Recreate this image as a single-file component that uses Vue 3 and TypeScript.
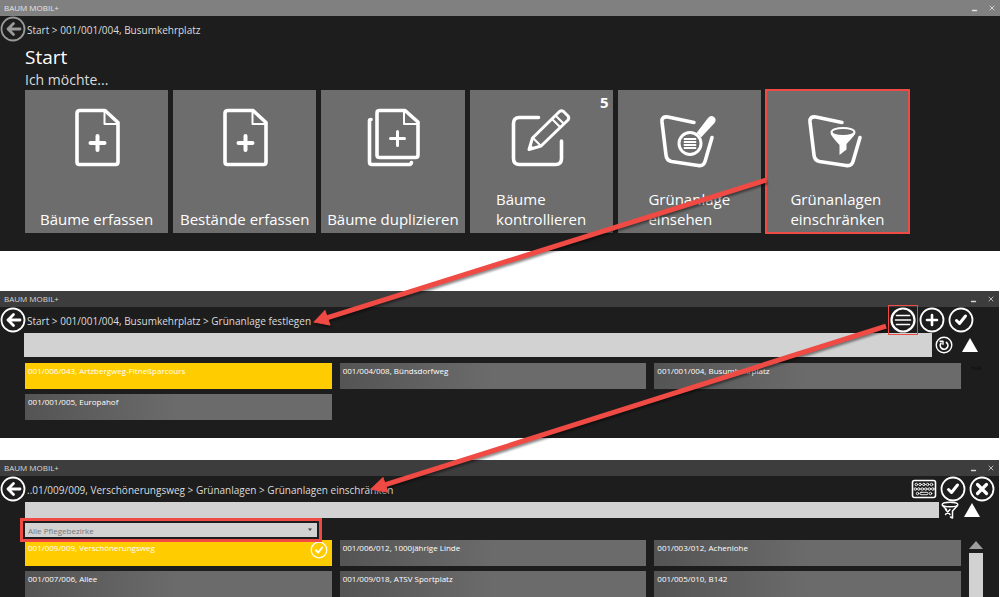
<script setup lang="ts">
import { ref } from 'vue'

type TileIcon = 'file' | 'copy' | 'edit' | 'search' | 'funnel'

interface Tile {
  icon: TileIcon
  lines: string[]
  count?: number
  marked?: boolean
}

const appName = 'BAUM MOBIL+'

const tiles: Tile[] = [
  { icon: 'file', lines: ['Bäume erfassen'] },
  { icon: 'file', lines: ['Bestände erfassen'] },
  { icon: 'copy', lines: ['Bäume duplizieren'] },
  { icon: 'edit', lines: ['Bäume', 'kontrollieren'], count: 5 },
  { icon: 'search', lines: ['Grünanlage', 'einsehen'] },
  { icon: 'funnel', lines: ['Grünanlagen', 'einschränken'], marked: true },
]

const pickList = [
  '001/006/043, Artzbergweg-Fitneßparcours',
  '001/004/008, Bündsdorfweg',
  '001/001/004, Busumkehrplatz',
  '001/001/005, Europahof',
]

const filterList = [
  '001/009/009, Verschönerungsweg',
  '001/006/012, 1000jährige Linde',
  '001/003/012, Achenlohe',
  '001/007/006, Allee',
  '001/009/018, ATSV Sportplatz',
  '001/005/010, B142',
]

const pickQuery = ref('')
const filterQuery = ref('')
const district = ref('all')
const picked = ref(0)
const filtered = ref(0)
</script>

<template>
  <div class="page">
    <section class="window start">
      <div class="titlebar">
        <span>{{ appName }}</span>
        <div class="controls">
          <button type="button" aria-label="Minimieren"><svg viewBox="0 0 8 8"><path d="M1.5 6.5h4" stroke-width="1.4" /></svg></button>
          <button type="button" aria-label="Schließen"><svg viewBox="0 0 8 8"><path d="M2 2l4 4M6 2l-4 4" /></svg></button>
        </div>
      </div>
      <header class="head">
        <button type="button" class="round dim" aria-label="Zurück">
          <svg viewBox="0 0 26 26"><circle cx="13" cy="13" r="11.500" /><path d="M20 13H8M13.500 7.500L8 13l5.500 5.500" stroke-width="2.800" /></svg>
        </button>
        <span class="crumbs">Start &gt; 001/001/004, Busumkehrplatz</span>
      </header>
      <h1>Start</h1>
      <p class="lead">Ich möchte...</p>
      <div class="tiles">
        <button v-for="tile in tiles" :key="tile.lines.join(' ')" type="button" class="tile" :class="{ marked: tile.marked }">
          <span v-if="tile.count" class="count">{{ tile.count }}</span>
          <svg class="glyph" viewBox="0 0 64 64" aria-hidden="true">
            <g v-if="tile.icon === 'file'">
              <path d="M15 4.500H40L53 16.500V56q0 2.500-2.500 2.500H14.500Q12 58.500 12 56V7Q12 4.500 15 4.500Z" />
              <path d="M39.500 5V18H53" stroke-width="2" />
              <path d="M32.500 30V44M25.500 37H39.500" stroke-width="4" />
            </g>
            <g v-else-if="tile.icon === 'copy'">
              <path d="M18.500 4.500H44L57 16V49q0 2.500-2.500 2.500H18.500Q16 51.500 16 49V7Q16 4.500 18.500 4.500Z" />
              <path d="M43 5V18H57" stroke-width="2" />
              <path d="M36.500 25.500V39.500M29.500 32.500H43.500" stroke-width="3" />
              <path d="M10 13.500Q8.500 13.500 8.500 15V56q0 2.500 2.500 2.500H48Q50 58.500 50.500 56.500" />
            </g>
            <g v-else-if="tile.icon === 'edit'">
              <path d="M29.500 11.500H10.500Q4.500 11.500 4.500 17.500V52.500Q4.500 58.500 10.500 58.500H46.500Q52.500 58.500 52.500 52.500V35" />
              <path d="M20 43.500L23.500 32L50.500 5.500Q52.500 4 54.500 5.500L59 10Q60.500 12 59 14L32 40Z" stroke-width="3" />
              <path d="M24 32L32 40M43 13L51 21M46.500 9.500L55 18" stroke-width="2" />
              <path d="M19 44.500L21 38L25.500 42.500Z" class="solid" />
            </g>
            <g v-else>
              <path d="M37 16.500L11 11Q4.500 10 5 16L9 49Q9.500 54.500 14.500 55.500L41 59.500Q46.500 60.500 48 55.500L55 31.500" />
              <g v-if="tile.icon === 'search'">
                <circle cx="33" cy="37.500" r="11" stroke-width="3" />
                <path d="M27.500 33H38.500M27.500 36H38.500M27.500 39H38.500M27.500 42H38.500" stroke-width="1.800" />
                <path d="M39.500 27L51 12Q54 8.500 57 11Q60 13.500 57.500 17L44 31.500Q42 28 39.500 27Z" class="solid" />
              </g>
              <g v-else>
                <ellipse cx="38" cy="26" rx="11.500" ry="4" stroke-width="2" />
                <path d="M25.500 27Q38 34 50.500 27Q50 29 41.500 38V43.500L34.500 49V39Q26 30 25.500 27Z" class="solid" />
              </g>
            </g>
          </svg>
          <span class="label"><span v-for="line in tile.lines" :key="line">{{ line }}</span></span>
        </button>
      </div>
    </section>

    <section class="window pick">
      <div class="titlebar">
        <span>{{ appName }}</span>
        <div class="controls">
          <button type="button" aria-label="Minimieren"><svg viewBox="0 0 8 8"><path d="M1.500 6.500h4" stroke-width="1.400" /></svg></button>
          <button type="button" aria-label="Schließen"><svg viewBox="0 0 8 8"><path d="M2 2l4 4M6 2l-4 4" /></svg></button>
        </div>
      </div>
      <header class="head">
        <button type="button" class="round" aria-label="Zurück">
          <svg viewBox="0 0 26 26"><circle cx="13" cy="13" r="11.500" /><path d="M20 13H8M13.500 7.500L8 13l5.500 5.500" stroke-width="2.800" /></svg>
        </button>
        <span class="crumbs">Start &gt; 001/001/004, Busumkehrplatz &gt; Grünanlage festlegen</span>
        <div class="actions">
          <button type="button" class="round marked" aria-label="Liste">
            <svg viewBox="0 0 26 26"><circle cx="13" cy="13" r="11.500" stroke-width="2.200" /><path d="M6.500 8.500h13M5.500 13h15M6.500 17.500h13" stroke-width="1.600" /></svg>
          </button>
          <button type="button" class="round" aria-label="Hinzufügen">
            <svg viewBox="0 0 26 26"><circle cx="13" cy="13" r="11.500" /><path d="M13 8v10M8 13h10" stroke-width="2.600" /></svg>
          </button>
          <button type="button" class="round" aria-label="Übernehmen">
            <svg viewBox="0 0 26 26"><circle cx="13" cy="13" r="11.500" /><path d="M8.500 13.500l3 3L17.500 9" stroke-width="3" /></svg>
          </button>
        </div>
      </header>
      <div class="search">
        <input v-model="pickQuery" type="text" aria-label="Grünanlage suchen" />
        <div class="tools">
          <button type="button" aria-label="Zurücksetzen">
            <svg viewBox="0 0 18 18"><circle cx="9" cy="9" r="7.800" stroke-width="1.400" /><path d="M6 7.200A3.800 3.800 0 1 0 11.500 6.500" stroke-width="1.700" /><path d="M5 5.200H8V8.200" stroke-width="1.400" /></svg>
          </button>
          <button type="button" aria-label="Einklappen"><svg viewBox="0 0 18 18"><path class="solid" d="M9 2L17 16H1Z" /></svg></button>
        </div>
      </div>
      <div class="results">
        <div class="cards">
          <button v-for="(entry, i) in pickList" :key="entry" type="button" class="card" :class="{ active: picked === i }" @click="picked = i">{{ entry }}</button>
        </div>
        <span class="empty">null</span>
      </div>
    </section>

    <section class="window filter">
      <div class="titlebar">
        <span>{{ appName }}</span>
        <div class="controls">
          <button type="button" aria-label="Minimieren"><svg viewBox="0 0 8 8"><path d="M1.500 6.500h4" stroke-width="1.400" /></svg></button>
          <button type="button" aria-label="Schließen"><svg viewBox="0 0 8 8"><path d="M2 2l4 4M6 2l-4 4" /></svg></button>
        </div>
      </div>
      <header class="head">
        <button type="button" class="round" aria-label="Zurück">
          <svg viewBox="0 0 26 26"><circle cx="13" cy="13" r="11.500" /><path d="M20 13H8M13.500 7.500L8 13l5.500 5.500" stroke-width="2.800" /></svg>
        </button>
        <span class="crumbs">..01/009/009, Verschönerungsweg &gt; Grünanlagen &gt; Grünanlagen einschränken</span>
        <div class="actions">
          <button type="button" class="round" aria-label="Tastatur">
            <svg viewBox="0 0 26 26">
              <rect x="1.500" y="4.500" width="23" height="17" rx="2" stroke-width="1.600" />
              <g stroke-width="0.900">
                <circle v-for="n in 5" :key="'a' + n" :cx="1.500 + n * 3.800" cy="8.500" r="1.250" />
                <circle v-for="n in 6" :key="'b' + n" :cx="0.800 + n * 3.500" cy="13" r="1.250" />
                <circle cx="6.500" cy="17.500" r="1.250" /><circle cx="19.500" cy="17.500" r="1.250" />
                <rect x="9" y="16.300" width="8" height="2.400" rx="1" />
              </g>
            </svg>
          </button>
          <button type="button" class="round" aria-label="Übernehmen">
            <svg viewBox="0 0 26 26"><circle cx="13" cy="13" r="11.500" /><path d="M8.500 13.500l3 3L17.500 9" stroke-width="3" /></svg>
          </button>
          <button type="button" class="round" aria-label="Abbrechen">
            <svg viewBox="0 0 26 26"><circle cx="13" cy="13" r="11.500" /><path d="M8.500 8.500l9 9M17.500 8.500l-9 9" stroke-width="3.200" /></svg>
          </button>
        </div>
      </header>
      <div class="search">
        <input v-model="filterQuery" type="text" aria-label="Grünanlagen suchen" />
        <div class="tools">
          <button type="button" aria-label="Filter entfernen">
            <svg viewBox="0 0 18 18"><ellipse cx="9" cy="3.500" rx="7.800" ry="2.300" stroke-width="1.400" /><path d="M1.500 4.500L5.500 8.500M16.500 4.500L11.500 10V12.500M11.500 12.500v4.500l-2-1" stroke-width="1.500" /><path d="M4.500 8.500l4.500 5M9 8.500L4.500 13.500" stroke-width="1.400" /></svg>
          </button>
          <button type="button" aria-label="Einklappen"><svg viewBox="0 0 18 18"><path class="solid" d="M9 2L17 16H1Z" /></svg></button>
        </div>
      </div>
      <div class="district">
        <select v-model="district" aria-label="Pflegebezirk">
          <option value="all">Alle Pflegebezirke</option>
        </select>
        <svg class="caret" viewBox="0 0 6 4" aria-hidden="true"><path d="M1 0.500H5L3 3Z" /></svg>
      </div>
      <div class="results">
        <div class="cards">
          <button v-for="(entry, i) in filterList" :key="entry" type="button" class="card" :class="{ active: filtered === i }" @click="filtered = i">
            <span>{{ entry }}</span>
            <svg v-if="filtered === i" class="tick" viewBox="0 0 18 18"><circle cx="9" cy="9" r="7.800" stroke-width="1.200" /><path d="M6 9.300l2.200 2.200L12.200 6.500" stroke-width="2" /></svg>
          </button>
        </div>
        <div class="scroll" aria-hidden="true">
          <svg viewBox="0 0 14 8"><path d="M7 0L14 8H0Z" /></svg>
          <div class="thumb"></div>
        </div>
      </div>
    </section>

    <svg class="arrows" viewBox="0 0 1000 597" preserveAspectRatio="none" aria-hidden="true">
      <path d="M766 180L326 318" />
      <path class="tip" d="M314 322L325 310.500L330 325Z" />
      <path d="M886 326L384 485" />
      <path class="tip" d="M371 489L383 477.500L388 492Z" />
    </svg>
  </div>
</template>

<style>
body {
  margin: 0;
  background: #fff;
}
</style>

<style scoped>
.page {
  position: relative;
  overflow: hidden;
  font-family: "Open Sans", "Noto Sans", sans-serif;
  color: #fff;
}

button {
  padding: 0;
  border: 0;
  background: none;
  color: inherit;
  font: inherit;
}

svg {
  display: block;
  fill: none;
  stroke: currentColor;
  stroke-width: 1.8;
  stroke-linecap: round;
  stroke-linejoin: round;
}

.solid {
  fill: currentColor;
  stroke: none;
}

.window {
  background: #1d1d1d;
}

.start {
  padding-bottom: 18px;
  margin-bottom: 40px;
}

.pick {
  padding-bottom: 18px;
  margin: 0 1px 22px 0;
}

.filter {
  margin-right: 1px;
}

.titlebar {
  display: flex;
  align-items: center;
  justify-content: space-between;
  height: 16px;
  padding: 0 4px;
  background: #3d3d3d;
  color: #d8d8d8;
  font-size: 8px;
  line-height: 16px;
}

.start .titlebar {
  background: #808080;
  color: #e4e4e4;
}

.controls {
  display: flex;
  gap: 9px;
}

.controls svg {
  width: 8px;
  height: 8px;
  stroke-width: 0.8;
}

.head {
  display: flex;
  align-items: center;
  height: 26px;
}

.round svg {
  width: 26px;
  height: 26px;
}

.dim {
  color: #9a9a9a;
}

.crumbs {
  flex: 1;
  margin-left: 1px;
  padding-top: 1px;
  color: #dcdcdc;
  font-size: 10px;
  line-height: 16px;
  white-space: nowrap;
}

.actions {
  display: flex;
  gap: 3px;
}

.pick .actions {
  margin-right: 25px;
}

.filter .actions {
  margin-right: 4px;
}

.round.marked {
  position: relative;
  z-index: 1;
  outline: 1px solid #f04a44;
  outline-offset: 1px;
}

h1 {
  margin: 2px 25px 0;
  font-size: 19px;
  font-weight: 400;
  line-height: 26px;
}

.lead {
  margin: 0 25px;
  color: #dcdcdc;
  font-size: 14px;
  line-height: 19px;
}

.tiles {
  display: grid;
  grid-template-columns: repeat(6, 1fr);
  gap: 5px;
  margin: 1px 91px 0 25px;
}

.tile {
  position: relative;
  display: flex;
  flex-direction: column;
  align-items: center;
  justify-content: space-between;
  aspect-ratio: 1;
  padding: 16px 0 4px;
  background: #6d6d6d;
}

.tile.marked {
  outline: 2px solid #f04a44;
  outline-offset: -1px;
}

.glyph {
  width: 64px;
  height: 64px;
  stroke-width: 3.6;
}

.label {
  display: flex;
  flex-direction: column;
  font-size: 15px;
  line-height: 20px;
  text-align: left;
  white-space: nowrap;
}

.count {
  position: absolute;
  top: 2px;
  right: 4px;
  font-size: 15px;
  font-weight: 700;
  line-height: 20px;
}

.search {
  display: flex;
  margin-left: 24px;
}

.search input {
  flex: 1;
  min-width: 0;
  height: 24px;
  box-sizing: border-box;
  padding: 0 4px;
  border: 0;
  border-radius: 0;
  background: #d2d2d2;
  color: #333;
  font: inherit;
  font-size: 12px;
}

.filter .search input {
  height: 16px;
}

.tools {
  display: flex;
  align-items: center;
  gap: 8px;
  padding: 0 20px 0 3px;
}

.filter .tools {
  gap: 4px;
  padding: 0 18px 0 2px;
}

.tools svg {
  width: 18px;
  height: 18px;
}

.filter .tools {
  height: 16px;
}

.filter .search {
  margin-left: 25px;
}

.district {
  position: relative;
  display: flex;
  align-items: center;
  width: 292px;
  height: 14px;
  margin: 5px 0 3px 25px;
  outline: 3px solid #f04a44;
  outline-offset: 2px;
  z-index: 1;
}

.district select {
  width: 100%;
  height: 14px;
  padding: 0 3px;
  border: 0;
  border-radius: 0;
  appearance: none;
  background: #d2d2d2;
  color: #777;
  font: inherit;
  font-size: 8px;
  line-height: 13px;
}

.caret {
  position: absolute;
  right: 4px;
  width: 6px;
  height: 4px;
  fill: #444;
  stroke: none;
}

.results {
  display: flex;
  gap: 8px;
  margin-left: 25px;
}

.pick .results {
  margin-top: 6px;
}

.cards {
  display: grid;
  flex: 1;
  grid-template-columns: repeat(3, 1fr);
  gap: 5px 8px;
}

.card {
  display: flex;
  align-items: flex-start;
  justify-content: space-between;
  height: 26px;
  box-sizing: border-box;
  padding: 1px 4px 0 3px;
  background: linear-gradient(90deg, #545454, #6b6b6b 50%);
  font-size: 8px;
  line-height: 13px;
  text-align: left;
  white-space: nowrap;
}

.card.active {
  background: #ffcc00;
}

.tick {
  width: 18px;
  height: 18px;
}

.empty {
  width: 28px;
  padding-left: 2px;
  color: #090909;
  font-size: 6px;
  line-height: 10px;
}

.scroll {
  display: flex;
  flex-direction: column;
  gap: 4px;
  width: 14px;
  margin-right: 16px;
  padding-top: 1px;
}

.scroll svg {
  width: 14px;
  height: 8px;
  fill: #9c9c9c;
  stroke: none;
}

.thumb {
  flex: 1;
  background: #d2d2d2;
}

.arrows {
  position: absolute;
  inset: 0;
  z-index: 2;
  width: 100%;
  height: 100%;
  color: #f04a44;
  stroke-width: 5;
  stroke-linecap: butt;
  filter: drop-shadow(1px 2px 1px rgba(0, 0, 0, 0.45));
  pointer-events: none;
}

.tip {
  fill: currentColor;
  stroke-width: 1;
}
</style>
